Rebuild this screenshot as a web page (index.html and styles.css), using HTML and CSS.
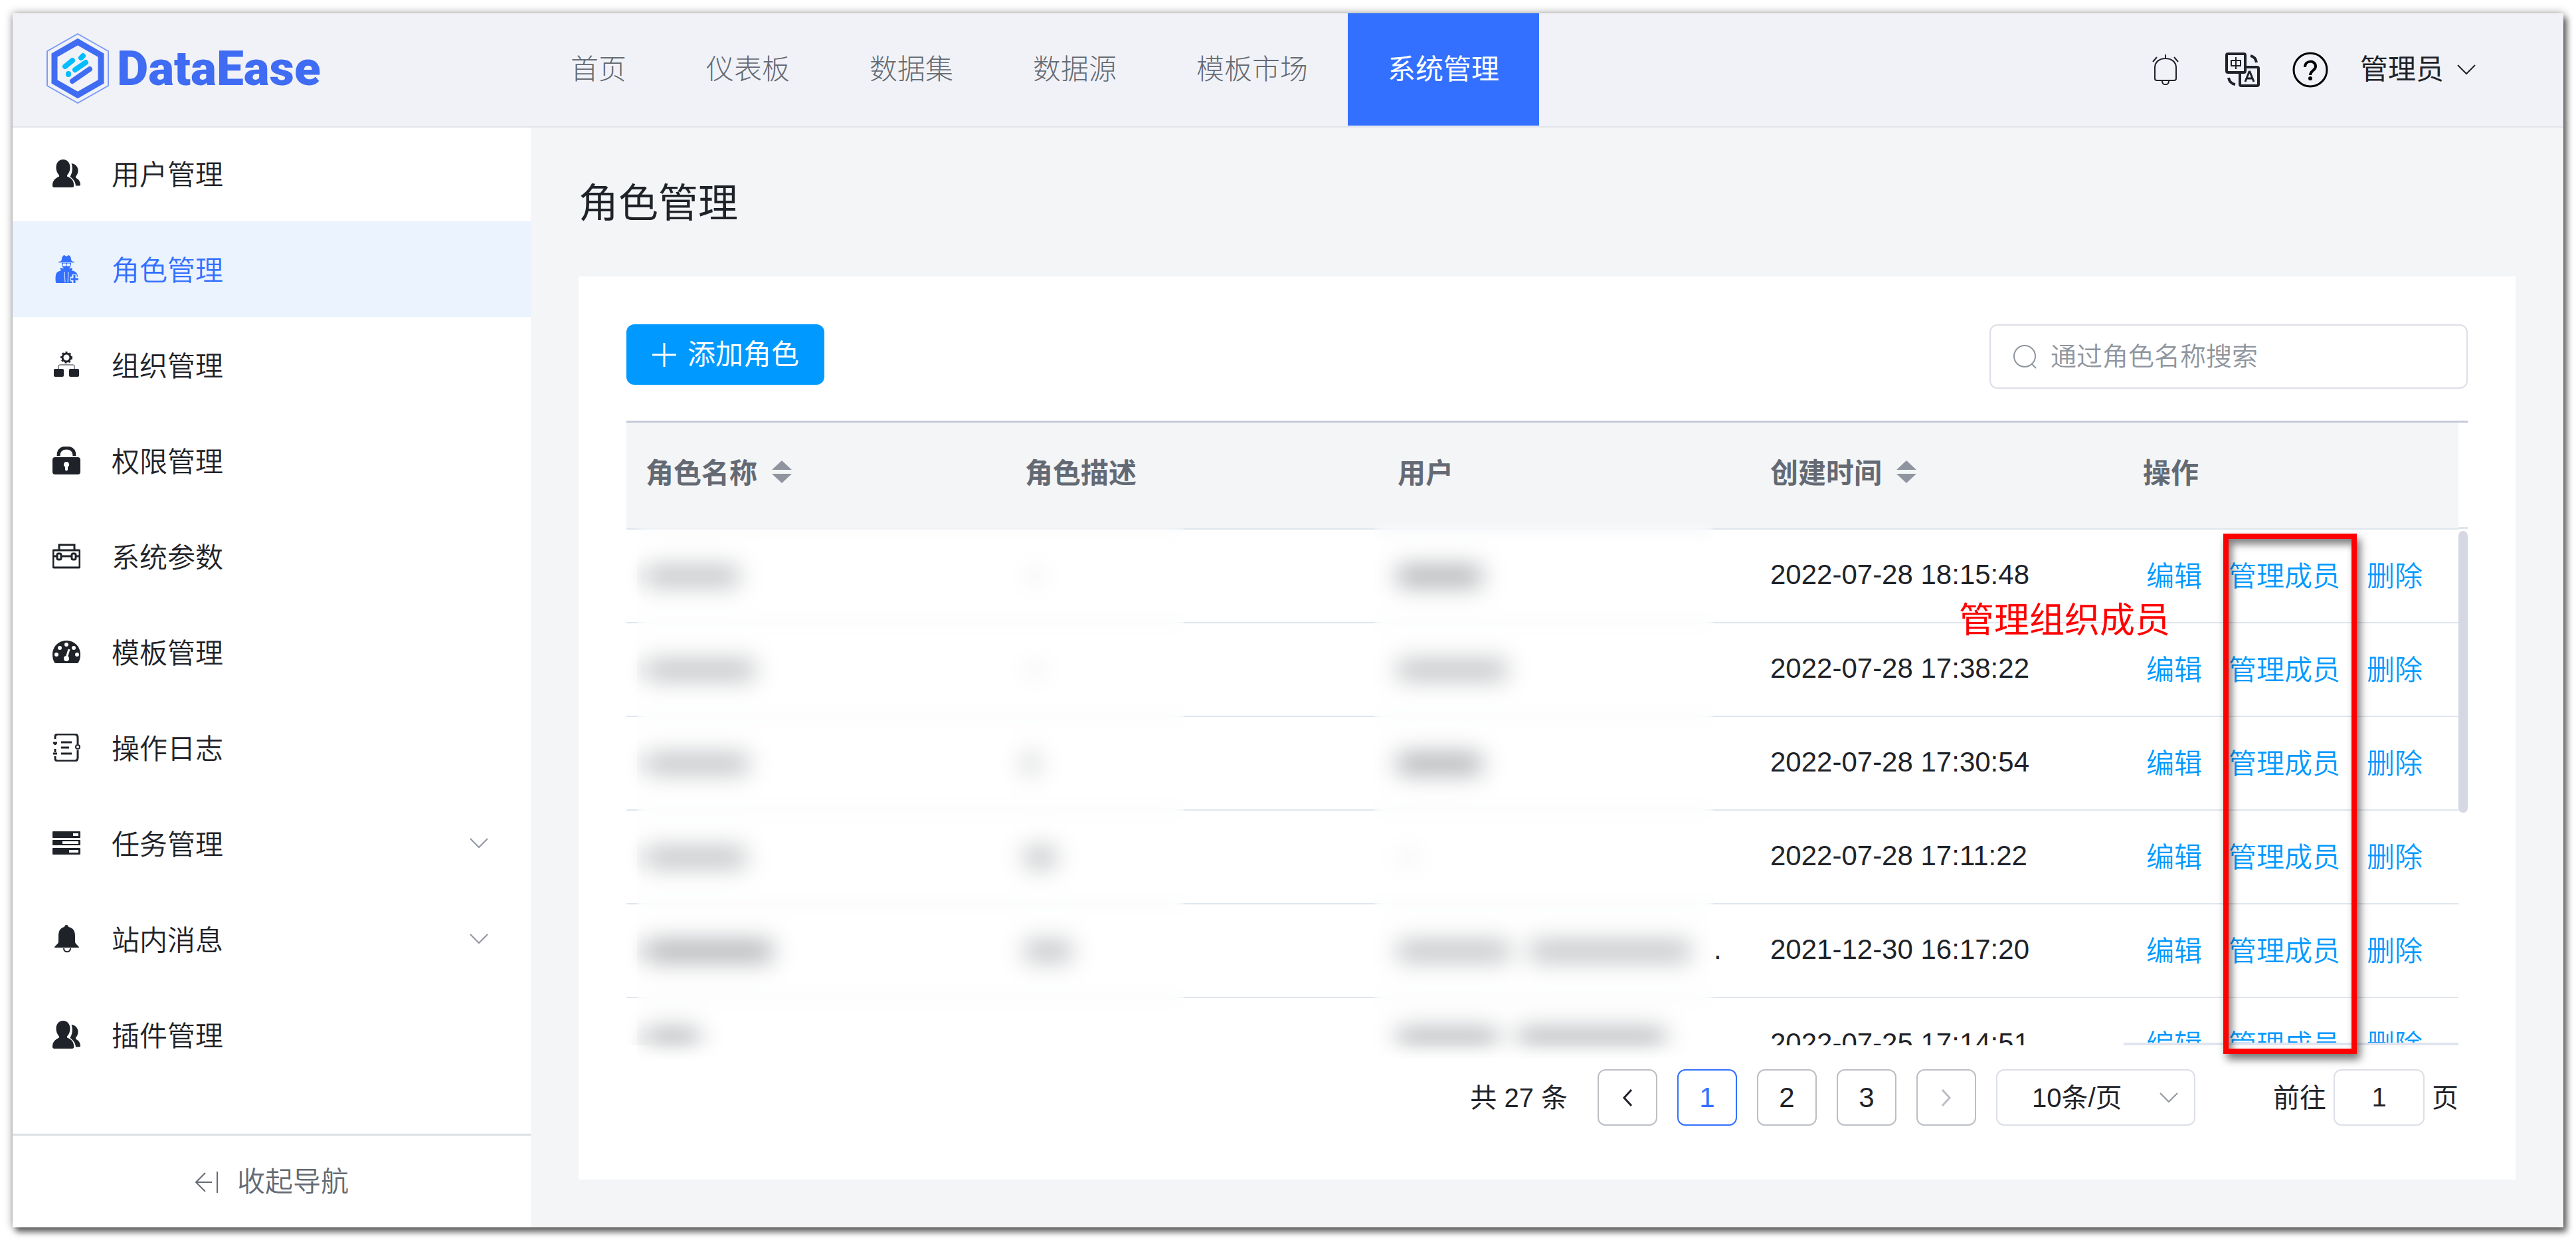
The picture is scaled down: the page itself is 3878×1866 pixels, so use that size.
FILE: index.html
```html
<!DOCTYPE html>
<html lang="zh-CN">
<head>
    <meta charset="UTF-8">
    <title>DataEase</title>
    <link rel="stylesheet" href="styles.css">
</head>
<body>
    <!-- shared icons -->
    <svg class="sprite" aria-hidden="true">
        <symbol id="i-users" viewBox="0 0 42 42">
            <path d="M16 0c6.500 0 10.500 5 10.500 12 0 5-2 9-4.500 11.500v2c5 2 9.500 5 10 11l.2 3c0 1.500-1 2.500-2.500 2.500H2.500C1 42 0 41 0 39.500c0-6 2-10 10-14v-2C7.500 21 5.500 17 5.500 12 5.500 5 9.500 0 16 0z"/>
            <path d="M28.500 6c5.500.5 10 4.500 10 10.500 0 4-1.500 7-3.500 9v2c4.500 2.500 7 5.500 7 10.500 0 1-.8 1.500-1.800 1.500H35c-.5-6-3.500-10-8.500-13.500C29 22 30 17 29.800 13c0-2.500-.5-4.800-1.300-7z"/>
        </symbol>
        <symbol id="i-down" viewBox="0 0 28 16">
            <path d="M1 1l13 13L27 1" fill="none" stroke="currentColor" stroke-width="2"/>
        </symbol>
        <symbol id="i-sort" viewBox="0 0 30 34">
            <path d="M15 0l15 14H0zM0 20h30L15 34z"/>
        </symbol>
    </svg>

    <div class="window">
        <header class="topbar">
            <a class="logo" href="#">
                <svg class="logo-mark" viewBox="0 0 94 106" aria-hidden="true">
                    <path d="M47 1l46 26v52L47 105 1 79V27z" fill="none" stroke="#7d9bf7" stroke-width="2"/>
                    <path d="M47 13l35 20v40L47 93 12 73V33z" fill="none" stroke="#3f6cf3" stroke-width="9"/>
                    <g fill="none" stroke-width="8" stroke-linecap="round">
                        <path d="M52 37l3-3M28 50l11-9M43 55l16-11M33 62v-1" stroke="#04bdff"/>
                        <path d="M39 72l26-18" stroke="#3f6cf3"/>
                    </g>
                </svg>
                <span class="logo-text">DataEase</span>
            </a>
            <nav class="tabs">
                <a href="#">首页</a>
                <a href="#">仪表板</a>
                <a href="#">数据集</a>
                <a href="#">数据源</a>
                <a href="#">模板市场</a>
                <a href="#" class="active">系统管理</a>
            </nav>
            <div class="tools">
                <button class="tool" aria-label="消息">
                    <svg width="40" height="46" viewBox="0 0 40 46" fill="none" stroke="#1f2329" stroke-width="2">
                        <path d="M4 36V20C4 11 11 6 20 6s16 5 16 14v16c0 2-1 3-3 3H7c-2 0-3-1-3-3zM20 0v6M1 11l6-7M39 11l-6-7M15 40c0 7 10 7 10 0"/>
                    </svg>
                </button>
                <button class="tool tool-lang" aria-label="语言">
                    <svg width="52" height="52" viewBox="0 0 52 52" fill="none" stroke="#1f2329" stroke-width="4">
                        <rect x="2" y="2" width="28" height="28" rx="2"/>
                        <path d="M30 22h18c2 0 2 1 2 2v24c0 2-1 2-2 2H24c-2 0-2-1-2-2V30"/>
                        <path d="M9 12h14v8H9zM16 7v18" stroke-width="2"/>
                        <path d="M30 44l6-15h1l6 15M32 39h9" stroke-width="3"/>
                        <path d="M38 5c5 1 8 4 9 10M5 38c1 6 4 9 10 10"/>
                    </svg>
                </button>
                <button class="tool" aria-label="帮助">
                    <svg width="54" height="54" viewBox="0 0 54 54" fill="none" stroke="#000">
                        <circle cx="27" cy="27" r="25" stroke-width="3"/>
                        <path d="M19 23c0-11 16-11 16-1 0 6-8 6-8 13" stroke-width="4"/>
                        <circle cx="27" cy="40" r="3" fill="#000" stroke="none"/>
                    </svg>
                </button>
                <button class="user">管理员<svg class="arrow"><use href="#i-down"/></svg></button>
            </div>
        </header>

        <div class="body">
            <aside class="sidebar">
                <ul class="menu">
                    <li><a href="#"><svg class="icon"><use href="#i-users"/></svg>用户管理</a></li>
                    <li><a href="#" class="active">
                        <svg class="icon" viewBox="0 0 42 42">
                            <path d="M14 6c0-3 2-6 4-6l3 2 3-2c2 0 4 3 4 6l1 3 4 1v1H9v-1l4-1zM14 12h14c0 4-1 6-3 8l5-1-1 4c5 1 8 3 9 8l-2 11H6c-2 0-2-12 0-15 1-2 4-3 7-4l-2-4 6 1c-2-2-3-4-3-8z"/>
                            <path d="M16 13h4v3h-4zM22 13h4v3h-4zM18 25l1 16M24 25l-1 16" fill="#ebf3ff" stroke="#ebf3ff"/>
                            <path d="M33 29v13M27 36h13" fill="none" stroke="#ebf3ff" stroke-width="7"/>
                            <path d="M33 30v12M28 36h11" fill="none" stroke="currentColor" stroke-width="3"/>
                        </svg>角色管理</a></li>
                    <li><a href="#">
                        <svg class="icon" viewBox="0 0 42 42">
                            <circle cx="21" cy="10" r="6" fill="none" stroke="currentColor" stroke-width="3"/>
                            <circle cx="21" cy="10" r="8" fill="none" stroke="currentColor" stroke-width="2" stroke-dasharray="3 3"/>
                            <path d="M9 27v-4q0-2 2-2h20q2 0 2 2v4" fill="none" stroke="currentColor" stroke-width="1"/>
                            <rect x="2" y="27" width="15" height="12" rx="2"/>
                            <rect x="25" y="27" width="15" height="12" rx="2"/>
                        </svg>组织管理</a></li>
                    <li><a href="#">
                        <svg class="icon" viewBox="0 0 42 42">
                            <path d="M9 14C9 5 14 2 21 2s12 3 12 12" fill="none" stroke="currentColor" stroke-width="5"/>
                            <path fill-rule="evenodd" d="M4 16h34q4 0 4 4v18q0 4-4 4H4q-4 0-4-4V20q0-4 4-4zm17 7a4 4 0 0 0-2 7.500V35q2 3 4 0v-4.500A4 4 0 0 0 21 23z"/>
                        </svg>权限管理</a></li>
                    <li><a href="#">
                        <svg class="icon" viewBox="0 0 42 42" fill="none" stroke="currentColor" stroke-width="3">
                            <rect x="1" y="12" width="40" height="26" rx="1"/>
                            <path d="M10 12V4h23v8M1 21h6M14 21h14M35 21h6"/>
                            <rect x="7" y="17" width="6" height="9" rx="2"/>
                            <rect x="29" y="17" width="6" height="9" rx="2"/>
                        </svg>系统参数</a></li>
                    <li><a href="#">
                        <svg class="icon" viewBox="0 0 42 42">
                            <path d="M21 4C9 4 0 13 0 25c0 5 1 8 3 12q1 1 2 1h32q1 0 2-1c2-4 3-7 3-12C42 13 33 4 21 4z"/>
                            <g fill="#fff"><circle cx="6" cy="25" r="3"/><circle cx="11" cy="15" r="3"/><circle cx="21" cy="10" r="3"/><circle cx="32" cy="15" r="3"/><circle cx="37" cy="25" r="3"/><circle cx="21" cy="31" r="4"/></g>
                            <path d="M21 30l4-13" stroke="#fff" stroke-width="3"/>
                        </svg>模板管理</a></li>
                    <li><a href="#">
                        <svg class="icon" viewBox="0 0 42 42" fill="none" stroke="currentColor" stroke-width="3">
                            <path d="M4 8V5q0-4 4-4h25q5 0 5 5v10M38 25v11q0 5-5 5H8q-4 0-4-4v-3M4 13v4M4 23v5M1 14h6M1 30h6M13 13h16M13 21h12M13 30h16"/>
                            <circle cx="38" cy="20" r="3" stroke-width="2"/>
                        </svg>操作日志</a></li>
                    <li><a href="#">
                        <svg class="icon" viewBox="0 0 42 42">
                            <path fill-rule="evenodd" d="M1 3h40q1 0 1 1v8q0 1-1 1H1q-1 0-1-1V4q0-1 1-1zm30 3v4h8V6zM1 16h40q1 0 1 1v6q0 1-1 1H1q-1 0-1-1v-6q0-1 1-1zm14 2v4h24v-4zM1 28h40q1 0 1 1v8q0 1-1 1H1q-1 0-1-1v-8q0-1 1-1zm24 3v4h14v-4z"/>
                        </svg>任务管理<svg class="arrow"><use href="#i-down"/></svg></a></li>
                    <li><a href="#">
                        <svg class="icon" viewBox="0 0 42 42">
                            <path d="M21 0q3 0 3 3c7 1 10 6 10 13v9c0 4 6 6 6 9H3c0-3 6-5 6-9v-9C9 9 12 4 18 3q0-3 3-3z"/>
                            <path d="M17 35c0 7 10 7 10 0" fill="none" stroke="currentColor" stroke-width="2"/>
                        </svg>站内消息<svg class="arrow"><use href="#i-down"/></svg></a></li>
                    <li><a href="#"><svg class="icon"><use href="#i-users"/></svg>插件管理</a></li>
                </ul>
                <button class="collapse">
                    <svg width="36" height="32" viewBox="0 0 36 32" fill="none" stroke="currentColor" stroke-width="2">
                        <path d="M16 2L2 16l14 14M2 16h24M34 0v32"/>
                    </svg>收起导航
                </button>
            </aside>

            <main class="main">
                <h1>角色管理</h1>
                <section class="card">
                    <div class="toolbar">
                        <button class="add">
                            <svg width="36" height="36" viewBox="0 0 36 36" stroke="#fff" stroke-width="3"><path d="M18 0v36M0 18h36"/></svg>添加角色
                        </button>
                        <label class="search">
                            <svg width="36" height="36" viewBox="0 0 36 36" fill="none" stroke="#8f959e" stroke-width="2">
                                <circle cx="17" cy="17" r="16"/><path d="M27 28l7 7"/>
                            </svg>
                            <input type="text" placeholder="通过角色名称搜索" aria-label="通过角色名称搜索">
                        </label>
                    </div>

                    <div class="table-area">
                        <div class="table-scroll">
                            <table>
                                <colgroup><col class="col-name"><col><col><col><col class="col-ops"></colgroup>
                                <thead>
                                    <tr>
                                        <th>角色名称<svg class="sort"><use href="#i-sort"/></svg></th>
                                        <th>角色描述</th>
                                        <th>用户</th>
                                        <th>创建时间<svg class="sort"><use href="#i-sort"/></svg></th>
                                        <th>操作</th>
                                    </tr>
                                </thead>
                                <tbody>
                                    <tr>
                                        <td><span class="bar" style="width:140px"></span></td>
                                        <td><span class="bar dash"></span></td>
                                        <td><span class="bar dark" style="width:126px"></span></td>
                                        <td>2022-07-28 18:15:48</td>
                                        <td class="ops"><a href="#">编辑</a><a href="#">管理成员</a><a href="#">删除</a></td>
                                    </tr>
                                    <tr>
                                        <td><span class="bar" style="width:164px"></span></td>
                                        <td><span class="bar dash"></span></td>
                                        <td><span class="bar" style="width:164px"></span></td>
                                        <td>2022-07-28 17:38:22</td>
                                        <td class="ops"><a href="#">编辑</a><a href="#">管理成员</a><a href="#">删除</a></td>
                                    </tr>
                                    <tr>
                                        <td><span class="bar" style="width:154px"></span></td>
                                        <td><span class="bar" style="width:18px"></span></td>
                                        <td><span class="bar dark" style="width:126px"></span></td>
                                        <td>2022-07-28 17:30:54</td>
                                        <td class="ops"><a href="#">编辑</a><a href="#">管理成员</a><a href="#">删除</a></td>
                                    </tr>
                                    <tr>
                                        <td><span class="bar" style="width:150px"></span></td>
                                        <td><span class="bar" style="width:46px"></span></td>
                                        <td><span class="bar dash"></span></td>
                                        <td>2022-07-28 17:11:22</td>
                                        <td class="ops"><a href="#">编辑</a><a href="#">管理成员</a><a href="#">删除</a></td>
                                    </tr>
                                    <tr>
                                        <td><span class="bar dark" style="width:190px"></span></td>
                                        <td><span class="bar" style="width:70px"></span></td>
                                        <td><span class="bar" style="width:168px"></span><span class="bar last" style="width:240px"></span>.</td>
                                        <td>2021-12-30 16:17:20</td>
                                        <td class="ops"><a href="#">编辑</a><a href="#">管理成员</a><a href="#">删除</a></td>
                                    </tr>
                                    <tr>
                                        <td><span class="bar" style="width:80px"></span></td>
                                        <td></td>
                                        <td><span class="bar" style="width:150px"></span><span class="bar last" style="width:220px"></span></td>
                                        <td>2022-07-25 17:14:51</td>
                                        <td class="ops"><a href="#">编辑</a><a href="#">管理成员</a><a href="#">删除</a></td>
                                    </tr>
                                </tbody>
                            </table>
                        </div>
                        <div class="rail"><div class="thumb"></div></div>
                        <!-- private columns -->
                        <div class="mask mask-name"></div>
                        <div class="mask mask-user"></div>
                        <!-- callout -->
                        <div class="note">管理组织成员</div>
                        <div class="frame"></div>
                    </div>

                    <div class="pager">
                        <span class="total">共 27 条</span>
                        <button aria-label="上一页"><svg width="16" height="28" viewBox="0 0 16 28" fill="none" stroke="#1f2329" stroke-width="3"><path d="M14 2L3 14l11 12"/></svg></button>
                        <button class="current">1</button>
                        <button>2</button>
                        <button>3</button>
                        <button disabled aria-label="下一页"><svg width="16" height="28" viewBox="0 0 16 28" fill="none" stroke="#bbbfc4" stroke-width="3"><path d="M2 2l11 12L2 26"/></svg></button>
                        <div class="size">
                            <select aria-label="每页条数"><option>10条/页</option><option>20条/页</option></select>
                            <svg class="arrow"><use href="#i-down"/></svg>
                        </div>
                        <label class="jump">前往<input type="text" value="1">页</label>
                    </div>
                </section>
            </main>
        </div>
    </div>
</body>
</html>
```

FILE: styles.css
```css
* {
    box-sizing: border-box;
}

body {
    margin: 0;
    padding: 20px 19px 19px;
    min-height: 100vh;
    display: flex;
    background: #fff;
    color: #1f2329;
    font-family: "Liberation Sans", "Noto Sans CJK SC", sans-serif;
    font-size: 42px;
    line-height: 60px;
}

a {
    color: inherit;
    text-decoration: none;
}

button,
input,
select {
    font: inherit;
    color: inherit;
    background: none;
    border: none;
    padding: 0;
    margin: 0;
}

button {
    display: flex;
    align-items: center;
    cursor: pointer;
}

svg {
    flex: none;
    fill: currentColor;
}

svg[fill="none"] {
    fill: none;
}

.sprite {
    display: none;
}

.window {
    flex: 1;
    display: flex;
    flex-direction: column;
    background: #f4f5f7;
    box-shadow: 0 0 12px rgba(0, 0, 0, 0.4), 5px 7px 9px rgba(0, 0, 0, 0.55);
}

/* top bar */
.topbar {
    display: flex;
    height: 172px;
    padding-bottom: 1px;
    background: #f1f2f7;
    border-bottom: 2px solid #e2e4e9;
}

.logo {
    display: flex;
    align-items: center;
    gap: 12px;
    width: 780px;
    padding: 0 0 4px 51px;
}

.logo-mark {
    width: 94px;
    height: 106px;
}

.logo-text {
    font-family: Roboto, sans-serif;
    font-size: 73px;
    font-weight: 900;
    color: #3f6cf3;
}

.tabs {
    display: flex;
}

.tabs a {
    display: flex;
    align-items: center;
    padding: 0 60px;
    color: #646a73;
    font-weight: 300;
}

.tabs .active {
    background: #3370ff;
    color: #fff;
    font-weight: 400;
}

.tools {
    display: flex;
    align-items: center;
    margin-left: auto;
    padding-right: 132px;
}

.tool-lang {
    margin: 0 49px 0 70px;
}

.user {
    margin-left: 48px;
}

.arrow {
    width: 28px;
    height: 16px;
}

.user .arrow {
    margin-left: 20px;
}

/* left menu */
.body {
    flex: 1;
    display: flex;
}

.sidebar {
    width: 780px;
    display: flex;
    flex-direction: column;
    background: #fff;
}

.menu {
    flex: 1;
    list-style: none;
    margin: -3px 0 0;
    padding: 0;
}

.menu a {
    display: flex;
    align-items: center;
    height: 144px;
    padding: 5px 64px 0 60px;
    font-weight: 350;
}

.menu .active {
    background: #ebf3ff;
    color: #3370ff;
}

.icon {
    width: 42px;
    height: 42px;
    margin: 0 47px 6px 0;
}

.menu .arrow {
    margin: 0 0 6px auto;
    color: #8f959e;
}

.collapse {
    height: 141px;
    padding-top: 2px;
    justify-content: center;
    gap: 28px;
    border-top: 3px solid #dcdfe3;
    color: #646a73;
    font-weight: 350;
}

/* content */
.main {
    flex: 1;
    min-width: 0;
    display: flex;
    flex-direction: column;
    padding: 72px;
}

h1 {
    margin: 0 0 66px;
    font-size: 60px;
    line-height: 86px;
    font-weight: 400;
}

.card {
    flex: 1;
    padding: 72px;
    background: #fff;
}

.toolbar {
    display: flex;
    justify-content: space-between;
    align-items: flex-start;
    margin-bottom: 48px;
}

.add {
    height: 91px;
    padding: 0 38px 0 39px;
    gap: 17px;
    border-radius: 12px;
    background: #0099ff;
    color: #fff;
}

.search {
    display: flex;
    align-items: center;
    gap: 20px;
    width: 720px;
    height: 97px;
    padding: 0 34px;
    border: 2px solid #dcdfe6;
    border-radius: 12px;
    font-size: 39px;
    font-weight: 350;
}

.search input {
    flex: 1;
    min-width: 0;
}

.search input::placeholder {
    color: #8f959e;
    opacity: 1;
}

.table-area {
    position: relative;
    border-top: 3px solid #c5cad9;
}

.table-scroll {
    position: relative;
    height: 937px;
    margin-right: 14px;
    overflow: hidden;
}

/* bottom edge of the fixed column */
.table-scroll::after {
    content: "";
    position: absolute;
    right: 0;
    bottom: 0;
    width: 504px;
    height: 4px;
    background: #e0e4ee;
}

table {
    width: 100%;
    table-layout: fixed;
    border-collapse: separate;
    border-spacing: 0;
}

.col-name {
    width: 571px;
}

.col-ops {
    width: 504px;
}

th,
td {
    padding: 0 0 4px 29px;
    text-align: left;
    white-space: nowrap;
    border-bottom: 2px solid #e0e6ed;
}

th {
    height: 161px;
    padding-bottom: 6px;
    background: #f4f5f7;
    color: #646a73;
    font-weight: 700;
}

td {
    height: 141px;
}

.sort {
    width: 30px;
    height: 34px;
    margin-left: 22px;
    color: #8f959e;
}

.ops {
    padding: 3px 0 0 34px;
    color: #0099ff;
    font-weight: 350;
}

.ops a + a {
    margin-left: 40px;
}

.bar {
    display: inline-block;
    vertical-align: middle;
    height: 30px;
    background: #bcbfc1;
    filter: blur(14px);
}

.bar.dark {
    background: #a8abae;
}

.bar.dash {
    width: 16px;
    height: 8px;
    margin-left: 8px;
}

.bar.last {
    margin: 0 36px 0 32px;
}

tr:last-child .bar {
    height: 52px;
}

.rail {
    position: absolute;
    top: 157px;
    right: 0;
    width: 14px;
    border-top: 3px solid #e0e6ed;
}

.thumb {
    height: 424px;
    margin-top: 3px;
    border-radius: 7px;
    background: #d5d8e2;
}

.mask {
    position: absolute;
    backdrop-filter: blur(12px);
}

.mask-name {
    top: 159px;
    left: 16px;
    width: 824px;
    height: 800px;
}

.mask-user {
    top: 151px;
    left: 1126px;
    width: 510px;
    height: 805px;
}

.note {
    position: absolute;
    top: 260px;
    right: 448px;
    font-size: 53px;
    line-height: 76px;
    color: #f00;
}

.frame {
    position: absolute;
    top: 167px;
    right: 167px;
    width: 201px;
    height: 783px;
    border: 8px solid #f00;
    box-shadow: 5px 8px 12px rgba(0, 0, 0, 0.55), inset 5px 8px 12px rgba(0, 0, 0, 0.5);
}

/* pagination */
.pager {
    display: flex;
    justify-content: flex-end;
    align-items: center;
    gap: 30px;
    margin-top: 36px;
    padding-right: 14px;
    font-size: 40px;
}

.total {
    margin-right: 15px;
}

.pager button {
    justify-content: center;
    width: 90px;
    height: 85px;
    border: 2px solid #bbbfc4;
    border-radius: 12px;
    font-size: 42px;
}

.pager .current {
    border-color: #3370ff;
    color: #3370ff;
}

.size {
    display: flex;
    align-items: center;
    width: 300px;
    height: 85px;
    padding-right: 24px;
    border: 2px solid #dcdfe6;
    border-radius: 12px;
}

.size select {
    flex: 1;
    appearance: none;
    height: 80px;
    padding-left: 52px;
}

.size .arrow {
    color: #8f959e;
}

.jump {
    display: flex;
    align-items: center;
    gap: 11px;
    margin-left: 87px;
}

.jump input {
    width: 137px;
    height: 85px;
    border: 2px solid #dcdfe6;
    border-radius: 12px;
    text-align: center;
}
```
